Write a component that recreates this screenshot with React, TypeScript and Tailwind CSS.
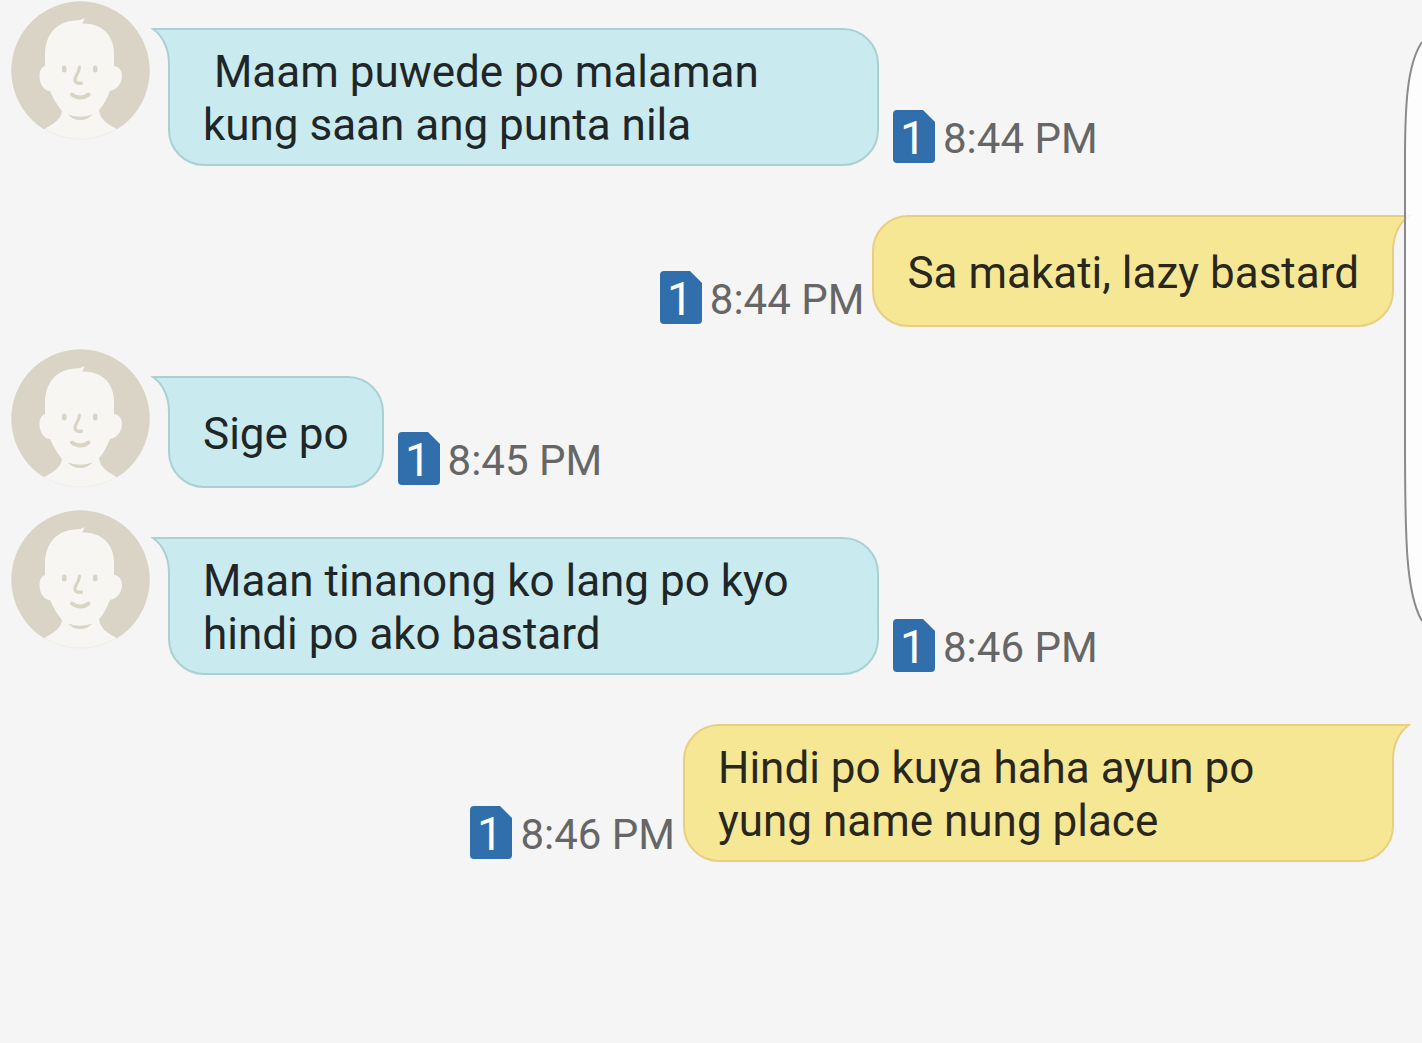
import clsx from "clsx";

type Message = {
  text: string;
  time: string;
  sent?: boolean;
};

const messages: Message[] = [
  { text: " Maam puwede po malaman\nkung saan ang punta nila", time: "8:44 PM" },
  { text: "Sa makati, lazy bastard", time: "8:44 PM", sent: true },
  { text: "Sige po", time: "8:45 PM" },
  { text: "Maan tinanong ko lang po kyo\nhindi po ako bastard", time: "8:46 PM" },
  { text: "Hindi po kuya haha ayun po\nyung name nung place", time: "8:46 PM", sent: true },
];

function Avatar() {
  return (
    <svg viewBox="0 0 139 139" className="mr-[18px] size-[139px] shrink-0 self-start" role="img" aria-label="Contact">
      <circle cx="69.5" cy="69.5" r="68.5" fill="#f7f6f2" stroke="#efeeea" />
      <path
        d="M33 128.3 A69.2 69.2 0 1 1 106 128.3 C97 123 89 119 88 109 C93 104 96 97 99 90 C106 89 111 82 111 75 C111 69 107 65 103 65 V53 C103 34 91 22 71 22.500 Q73 20 73.500 17 Q70 19.500 63 19.500 C46 21 34 33 34 54 V65 C31 66 28.500 69 28.500 75 C28.500 83 33 90 39 90 C42 97 46 104 51 110 C50 119 42 123 33 128.300 Z"
        fill="#dad4c7"
      />
      <rect x="51" y="64.500" width="4.500" height="7" rx="2.200" fill="#dad4c7" />
      <rect x="82" y="64.500" width="4.500" height="7" rx="2.200" fill="#dad4c7" />
      <g fill="none" stroke="#dad4c7" strokeLinecap="round" strokeLinejoin="round">
        <path d="M68.500 66 C68 73 63 76 64 79.500 Q65 83 70.500 82.200" strokeWidth="3.200" />
        <path d="M61 93.500 C66 97.500 73 97.500 77.500 93.500" strokeWidth="4" />
      </g>
      <path d="M57 113.500 Q69 118 81.500 113.500 Q76 119 69.500 119 Q62 119 57 113.500 Z" fill="#dad4c7" />
    </svg>
  );
}

function SimBadge() {
  return (
    <svg viewBox="0 0 42 53" className="h-[53px] w-[42px] shrink-0 overflow-visible" role="img" aria-label="SIM 1">
      <path d="M4 0 H30 L42 12 V49 Q42 53 38 53 H4 Q0 53 0 49 V4 Q0 0 4 0 Z" fill="#306fab" />
      <text x="7" y="44" fill="#fff" fontFamily="Roboto, sans-serif" fontSize="46">
        1
      </text>
    </svg>
  );
}

// Pointed corner, drawn over the square corner of the bubble
function Tail({ sent }: { sent?: boolean }) {
  return (
    <svg
      viewBox="0 0 21 36"
      className={clsx("absolute -top-[2px] h-9 w-[21px]", sent ? "-right-[19px] -scale-x-100" : "-left-[19px]")}
      aria-hidden="true"
    >
      <path d="M2 1 C12 8 18 21 18 36 H21 V1 Z" fill={sent ? "#f6e795" : "#c9eaee"} />
      <path d="M21 1 H2 C12 8 18 21 18 36" fill="none" stroke={sent ? "#e8cf80" : "#a9d0d3"} strokeWidth="2" />
    </svg>
  );
}

function MessageRow({ text, time, sent }: Message) {
  const wide = text.includes("\n");

  return (
    <li className={clsx("flex items-end", sent ? "flex-row-reverse pr-7" : "pl-[11px]")}>
      {!sent && <Avatar />}
      <div
        className={clsx(
          "relative mt-[27px] flex min-h-[112px] items-center border-2 px-[33px] pt-4 pb-3",
          wide && "w-[50vw]",
          sent
            ? "rounded-l-[36px] rounded-br-[36px] border-[#e8cf80] bg-[#f6e795] text-[#29271c]"
            : "rounded-r-[36px] rounded-bl-[36px] border-[#a9d0d3] bg-[#c9eaee] text-[#202627]"
        )}
      >
        <Tail sent={sent} />
        <p className="text-[44px] leading-[53px] whitespace-pre">{text}</p>
      </div>
      <div className={clsx("mb-[3px] flex items-end gap-2", sent ? "mr-2" : "ml-[14px]")}>
        <SimBadge />
        <time className="text-[42px] leading-[48px] whitespace-nowrap text-[#666]">{time}</time>
      </div>
    </li>
  );
}

function EdgeHandle() {
  return (
    <svg viewBox="0 0 18 584" className="absolute top-10 right-0 h-[584px] w-[18px]" aria-hidden="true">
      <path
        d="M18 2 C3 24 1 66 1 120 V400 C1 500 2 554 18 581"
        fill="#fff"
        fillOpacity="0.8"
        stroke="#8a8a8a"
        strokeWidth="2"
      />
    </svg>
  );
}

export default function App() {
  return (
    <main className="relative min-h-screen overflow-x-hidden bg-[#f5f5f5] font-[Roboto,sans-serif]">
      <ol className="flex flex-col gap-[22px] pt-px">
        {messages.map((message, i) => (
          <MessageRow key={i} {...message} />
        ))}
      </ol>
      <EdgeHandle />
    </main>
  );
}
